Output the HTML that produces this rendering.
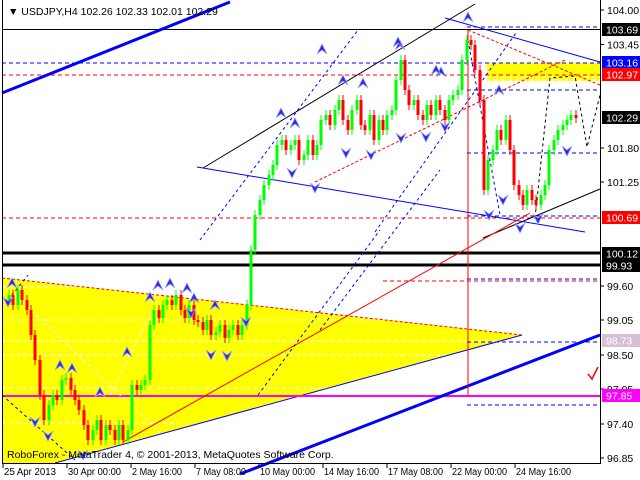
<!DOCTYPE html>
<html><head><meta charset="utf-8"><style>
html,body{margin:0;padding:0;background:#fff;width:640px;height:480px;overflow:hidden}
svg{display:block}
text{font-family:"Liberation Sans",sans-serif;font-size:10.5px}
.d{font-size:10px}
</style></head><body>
<svg width="640" height="480" xmlns="http://www.w3.org/2000/svg">
<defs>
<path id="ua" d="M-5 5 L0 -5 L5 5 L0 1Z" fill="#2a2ae0" stroke="#9aa0ff" stroke-width="0.8"/>
<path id="da" d="M-5 -5 L0 5 L5 -5 L0 -1Z" fill="#2a2ae0" stroke="#9aa0ff" stroke-width="0.8"/>
</defs>
<rect width="640" height="480" fill="#fff"/>
<polygon points="2,278 522,335 55,463 2,463" fill="#ffff00"/>
<g stroke="#fff" stroke-dasharray="4,3">
<line x1="2" y1="287" x2="300" y2="287"/><line x1="2" y1="320" x2="520" y2="320"/><line x1="2" y1="341" x2="522" y2="341"/><line x1="2" y1="355" x2="470" y2="355"/><line x1="2" y1="388" x2="330" y2="388"/><line x1="2" y1="423" x2="180" y2="423"/>
</g>
<line x1="2" y1="278" x2="522" y2="335" stroke="#f00" stroke-dasharray="3,2"/>
<line x1="55" y1="463" x2="522" y2="335" stroke="#00f"/>
<rect x="487" y="63" width="113" height="18" fill="#ffff00"/>
<line x1="487" y1="77" x2="600" y2="77" stroke="#fff" stroke-dasharray="4,3"/>
<line x1="487" y1="80" x2="600" y2="80" stroke="#fff" stroke-dasharray="4,3"/>
<line x1="2" y1="29.5" x2="600" y2="29.5" stroke="#000"/>
<g stroke-dasharray="4,3">
<line x1="2" y1="63" x2="600" y2="63" stroke="#00f"/>
<line x1="2" y1="75" x2="600" y2="75" stroke="#f00"/>
<line x1="2" y1="218" x2="600" y2="218" stroke="#f00"/>
<line x1="467" y1="27" x2="600" y2="27" stroke="#00f"/>
<line x1="467" y1="90" x2="600" y2="90" stroke="#00f"/>
<line x1="467" y1="153" x2="600" y2="153" stroke="#00f"/>
<line x1="467" y1="216" x2="600" y2="216" stroke="#00f"/>
<line x1="467" y1="279" x2="600" y2="279" stroke="#00f"/>
<line x1="383" y1="281" x2="600" y2="281" stroke="#f00"/>
<line x1="467" y1="342" x2="600" y2="342" stroke="#00f"/>
<line x1="467" y1="405" x2="600" y2="405" stroke="#00f"/>
</g>
<line x1="2" y1="253" x2="600" y2="253" stroke="#000" stroke-width="3"/>
<line x1="2" y1="265" x2="600" y2="265" stroke="#000" stroke-width="3"/>
<line x1="2" y1="396" x2="600" y2="396" stroke="#f0f" stroke-width="2"/>
<line x1="2" y1="93" x2="230" y2="2" stroke="#00f" stroke-width="3"/>
<line x1="240" y1="474" x2="600" y2="335" stroke="#00f" stroke-width="3"/>
<line x1="203" y1="168" x2="475" y2="4" stroke="#000"/>
<line x1="483" y1="238" x2="600" y2="189" stroke="#000"/>
<line x1="197" y1="167" x2="585" y2="232" stroke="#00f"/>
<line x1="445" y1="18" x2="600" y2="62" stroke="#00f"/>
<line x1="468" y1="30" x2="600" y2="85" stroke="#f00" stroke-dasharray="3,2"/>
<line x1="315" y1="182" x2="565" y2="60" stroke="#f00" stroke-dasharray="3,2"/>
<line x1="123" y1="442" x2="530" y2="213" stroke="#f00"/>
<line x1="468" y1="30" x2="468" y2="396" stroke="#f00"/>
<g stroke="#00f" stroke-dasharray="3,3">
<line x1="200" y1="240" x2="358" y2="30"/>
<line x1="320" y1="330" x2="440" y2="170"/>
<line x1="375" y1="232" x2="516" y2="33"/>
<line x1="258" y1="395" x2="380" y2="230"/>
<line x1="8" y1="300" x2="28" y2="275"/>
<line x1="2" y1="395" x2="75" y2="460"/>
<line x1="468" y1="40" x2="500" y2="215"/>
</g>
<g stroke="#fff" stroke-dasharray="3,3">
<line x1="10" y1="290" x2="183" y2="455"/>
<line x1="110" y1="395" x2="170" y2="275"/>
</g>
<path d="M535 218 L550 78 L575 76 L587 147 L600 95" fill="none" stroke="#000" stroke-dasharray="3,3"/>
<path stroke="#00ff00" stroke-width="1" fill="none" d="M9 290V305M18 285V310M49 400V425M53 390V410M62 375V405M66 373V385M93 425V445M97 415V435M106 420V445M119 420V445M128 425V445M132 380V435M141 380V395M145 375V390M150 320V385M154 305V330M163 300V323M167 295V310M176 290V310M189 300V323M207 315V335M216 327V340M220 320V337M229 325V343M233 320V335M242 320V340M247 300V330M251 245V310M255 210V255M260 195V220M264 180V205M269 170V190M273 160V180M277 140V170M282 135V150M291 140V155M295 135V150M304 150V165M308 135V160M317 140V160M321 115V150M326 110V125M335 105V130M339 95V115M352 105V135M357 95V115M370 110V135M379 115V145M387 110V135M392 105V120M396 75V115M401 55V85M414 95V110M427 100V125M436 95V120M449 95V125M453 90V105M458 85V100M462 55V95M467 35V65M488 155V195M493 145V165M497 125V155M506 115V145M527 185V210M541 190V210M545 180V200M549 145V190M554 135V155M558 125V145M563 120V135M567 115V130M571 110V125"/>
<path stroke="#00ff00" stroke-width="3" fill="none" d="M9 295V300M18 290V305M49 405V420M53 395V405M62 380V400M66 378V380M93 430V440M97 420V430M106 425V440M119 425V440M128 430V440M132 385V430M141 385V390M145 380V385M150 325V380M154 310V325M163 305V318M167 300V305M176 295V305M189 305V318M207 320V330M216 332V335M220 325V332M229 330V338M233 325V330M242 325V335M247 305V325M251 250V305M255 215V250M260 200V215M264 185V200M269 175V185M273 165V175M277 145V165M282 140V145M291 145V150M295 140V145M304 155V160M308 140V155M317 145V155M321 120V145M326 115V120M335 110V125M339 100V110M352 110V130M357 100V110M370 115V130M379 120V140M387 115V130M392 110V115M396 80V110M401 60V80M414 100V105M427 105V120M436 100V115M449 100V120M453 95V100M458 90V95M462 60V90M467 40V60M488 160V190M493 150V160M497 130V150M506 120V140M527 190V205M541 195V205M545 185V195M549 150V185M554 140V150M558 130V140M563 125V130M567 120V125M571 115V120"/>
<path stroke="#ff0000" stroke-width="1" fill="none" d="M13 290V310M22 285V305M27 295V315M31 305V340M35 330V365M40 355V400M44 390V425M57 390V405M71 373V395M75 385V405M79 395V415M84 405V430M88 420V445M101 415V445M110 420V435M115 425V445M123 420V445M137 380V395M159 305V323M172 295V310M181 290V315M185 305V323M194 300V325M198 315V327M203 317V335M211 315V340M225 320V343M238 320V340M286 135V155M299 135V165M313 135V160M330 110V130M343 95V125M348 115V135M361 95V130M365 120V135M374 110V145M383 115V135M405 55V95M409 85V110M418 95V120M423 110V125M431 100V120M440 95V115M445 105V125M471 35V50M475 40V75M480 65V105M484 95V195M501 125V145M510 115V155M514 145V190M519 180V200M523 190V210M532 185V205M536 195V210M576 110V123"/>
<path stroke="#ff0000" stroke-width="3" fill="none" d="M13 295V305M22 290V300M27 300V310M31 310V335M35 335V360M40 360V395M44 395V420M57 395V400M71 378V390M75 390V400M79 400V410M84 410V425M88 425V440M101 420V440M110 425V430M115 430V440M123 425V440M137 385V390M159 310V318M172 300V305M181 295V310M185 310V318M194 305V320M198 320V322M203 322V330M211 320V335M225 325V338M238 325V335M286 140V150M299 140V160M313 140V155M330 115V125M343 100V120M348 120V130M361 100V125M365 125V130M374 115V140M383 120V130M405 60V90M409 90V105M418 100V115M423 115V120M431 105V115M440 100V110M445 110V120M471 40V45M475 45V70M480 70V100M484 100V190M501 130V140M510 120V150M514 150V185M519 185V195M523 195V205M532 190V200M536 200V205M576 115V118"/>
<use href="#ua" x="12" y="283"/><use href="#ua" x="60" y="365"/><use href="#ua" x="72" y="368"/><use href="#ua" x="100" y="392"/><use href="#ua" x="158" y="285"/><use href="#ua" x="170" y="283"/><use href="#ua" x="187" y="288"/><use href="#ua" x="194" y="298"/><use href="#ua" x="215" y="305"/><use href="#ua" x="127" y="352"/><use href="#ua" x="150" y="297"/><use href="#ua" x="281" y="113"/><use href="#ua" x="295" y="123"/><use href="#ua" x="343" y="80"/><use href="#ua" x="363" y="83"/><use href="#ua" x="400" y="45"/><use href="#ua" x="441" y="72"/><use href="#ua" x="468" y="17"/><use href="#ua" x="499" y="90"/><use href="#ua" x="398" y="42"/><use href="#ua" x="436" y="70"/><use href="#ua" x="322" y="49"/>
<use href="#da" x="8" y="302"/><use href="#da" x="35" y="422"/><use href="#da" x="48" y="436"/><use href="#da" x="246" y="322"/><use href="#da" x="211" y="355"/><use href="#da" x="227" y="356"/><use href="#da" x="191" y="313"/><use href="#da" x="292" y="173"/><use href="#da" x="315" y="188"/><use href="#da" x="346" y="153"/><use href="#da" x="371" y="155"/><use href="#da" x="401" y="138"/><use href="#da" x="426" y="137"/><use href="#da" x="445" y="127"/><use href="#da" x="489" y="215"/><use href="#da" x="520" y="228"/><use href="#da" x="538" y="219"/><use href="#da" x="567" y="151"/><use href="#da" x="503" y="200"/><use href="#da" x="83" y="455"/>
<path d="M588 374 L592 379 L598 367" fill="none" stroke="#f00" stroke-width="1.5"/>
<line x1="2.5" y1="0" x2="2.5" y2="463" stroke="#000"/>
<line x1="2" y1="463.5" x2="601" y2="463.5" stroke="#000"/>
<line x1="600.5" y1="0" x2="600.5" y2="464" stroke="#000"/>
<text x="8" y="15">▼ USDJPY,H4  102.26 102.33 102.01 102.29</text>
<text x="7" y="458">RoboForex - MetaTrader 4, © 2001-2013, MetaQuotes Software Corp.</text>
<g stroke="#000">
<line x1="600" y1="10" x2="604" y2="10"/><line x1="600" y1="44.5" x2="604" y2="44.5"/><line x1="600" y1="148" x2="604" y2="148"/><line x1="600" y1="182" x2="604" y2="182"/><line x1="600" y1="286" x2="604" y2="286"/><line x1="600" y1="320" x2="604" y2="320"/><line x1="600" y1="355" x2="604" y2="355"/><line x1="600" y1="389" x2="604" y2="389"/><line x1="600" y1="424" x2="604" y2="424"/><line x1="600" y1="458" x2="604" y2="458"/>
</g>
<text x="607" y="14">104.00</text><text x="607" y="48.5">103.45</text><text x="607" y="152">101.80</text><text x="607" y="186">101.25</text><text x="607" y="290">99.60</text><text x="607" y="324">99.05</text><text x="607" y="359">98.50</text><text x="607" y="393">97.95</text><text x="607" y="428">97.40</text><text x="607" y="462">96.85</text>
<g fill="#fff">
<rect x="602" y="23" width="38" height="13" fill="#000"/><text x="606" y="33.5">103.69</text>
<rect x="602" y="56" width="38" height="13" fill="#00f"/><text x="606" y="66.5">103.16</text>
<rect x="602" y="68" width="38" height="13" fill="#f00"/><text x="606" y="78.5">102.97</text>
<rect x="602" y="111" width="38" height="13" fill="#000"/><text x="606" y="121.5">102.29</text>
<rect x="602" y="211" width="38" height="13" fill="#f00"/><text x="606" y="221.5">100.69</text>
<rect x="602" y="247" width="38" height="13" fill="#000"/><text x="606" y="257.5">100.12</text>
<rect x="602" y="259" width="38" height="13" fill="#000"/><text x="606" y="269.5">99.93</text>
<rect x="602" y="334" width="38" height="13" fill="#d8bfd8"/><text x="606" y="344.5">98.73</text>
<rect x="602" y="389" width="38" height="13" fill="#f0f"/><text x="606" y="399.5">97.85</text>
</g>
<g stroke="#000">
<line x1="3" y1="463" x2="3" y2="468"/><line x1="67" y1="463" x2="67" y2="468"/><line x1="131" y1="463" x2="131" y2="468"/><line x1="195" y1="463" x2="195" y2="468"/><line x1="259" y1="463" x2="259" y2="468"/><line x1="323" y1="463" x2="323" y2="468"/><line x1="387" y1="463" x2="387" y2="468"/><line x1="451" y1="463" x2="451" y2="468"/><line x1="515" y1="463" x2="515" y2="468"/>
</g>
<g class="d">
<text class="d" x="4" y="475" textLength="52" lengthAdjust="spacingAndGlyphs">25 Apr 2013</text>
<text class="d" x="68" y="475" textLength="53" lengthAdjust="spacingAndGlyphs">30 Apr 00:00</text>
<text class="d" x="132" y="475" textLength="50" lengthAdjust="spacingAndGlyphs">2 May 16:00</text>
<text class="d" x="196" y="475" textLength="50" lengthAdjust="spacingAndGlyphs">7 May 08:00</text>
<text class="d" x="260" y="475" textLength="55" lengthAdjust="spacingAndGlyphs">10 May 00:00</text>
<text class="d" x="324" y="475" textLength="55" lengthAdjust="spacingAndGlyphs">14 May 16:00</text>
<text class="d" x="388" y="475" textLength="55" lengthAdjust="spacingAndGlyphs">17 May 08:00</text>
<text class="d" x="452" y="475" textLength="55" lengthAdjust="spacingAndGlyphs">22 May 00:00</text>
<text class="d" x="516" y="475" textLength="55" lengthAdjust="spacingAndGlyphs">24 May 16:00</text>
</g>
</svg>
</body></html>
